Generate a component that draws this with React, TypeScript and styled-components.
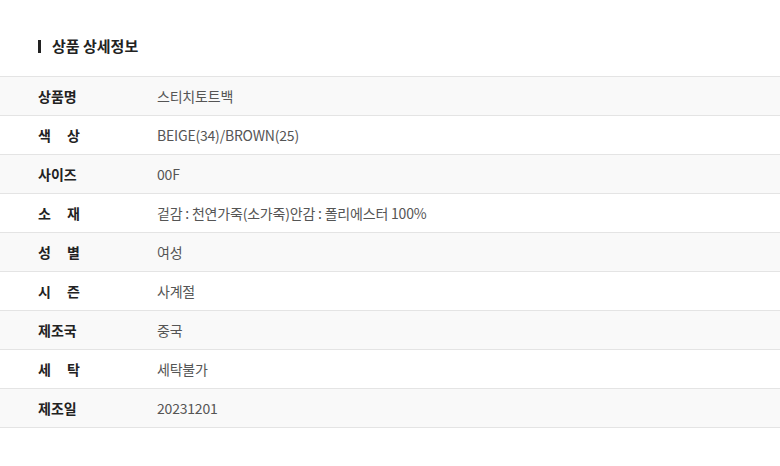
import styled, { createGlobalStyle } from "styled-components";

const GlobalStyle = createGlobalStyle`
  body {
    margin: 0;
    background: #fff;
    font-family: "Noto Sans CJK KR", "Noto Sans", sans-serif;
  }
`;

const Section = styled.section`
  width: 780px;
  padding-top: 36px;
`;

const Title = styled.h2`
  display: flex;
  align-items: center;
  gap: 11px;
  margin: 0 0 20px 38px;
  font-size: 15px;
  font-weight: 700;
  color: #222;
  line-height: 20px;

  &::before {
    content: "";
    width: 3px;
    height: 13px;
    background: #222;
  }
`;

const Table = styled.div`
  border-top: 1px solid #e4e4e4;
`;

const Row = styled.div<{ $shaded: boolean }>`
  display: grid;
  grid-template-columns: 157px 1fr;
  align-items: center;
  height: 38px;
  border-bottom: 1px solid #e4e4e4;
  background: ${(p) => (p.$shaded ? "#f9f9f9" : "#fff")};
`;

const Label = styled.div`
  padding-left: 38px;
  font-size: 14px;
  font-weight: 700;
  color: #222;
`;

const Spread = styled.div`
  display: flex;
  justify-content: space-between;
  width: 42px;
`;

const Value = styled.div`
  font-size: 14px;
  color: #555;
  letter-spacing: -0.2px;
`;

const rows: [string, string][] = [
  ["상품명", "스티치토트백"],
  ["색 상", "BEIGE(34)/BROWN(25)"],
  ["사이즈", "00F"],
  ["소 재", "겉감 : 천연가죽(소가죽)안감 : 폴리에스터 100%"],
  ["성 별", "여성"],
  ["시 즌", "사계절"],
  ["제조국", "중국"],
  ["세 탁", "세탁불가"],
  ["제조일", "20231201"],
];

export default function App() {
  return (
    <>
      <GlobalStyle />
      <Section>
        <Title>상품 상세정보</Title>
        <Table>
          {rows.map(([label, value], i) => (
            <Row key={label} $shaded={i % 2 === 0}>
              <Label>
                {label.includes(" ") ? (
                  <Spread>
                    {label.split(" ").map((c) => (
                      <span key={c}>{c}</span>
                    ))}
                  </Spread>
                ) : (
                  label
                )}
              </Label>
              <Value>{value}</Value>
            </Row>
          ))}
        </Table>
      </Section>
    </>
  );
}
